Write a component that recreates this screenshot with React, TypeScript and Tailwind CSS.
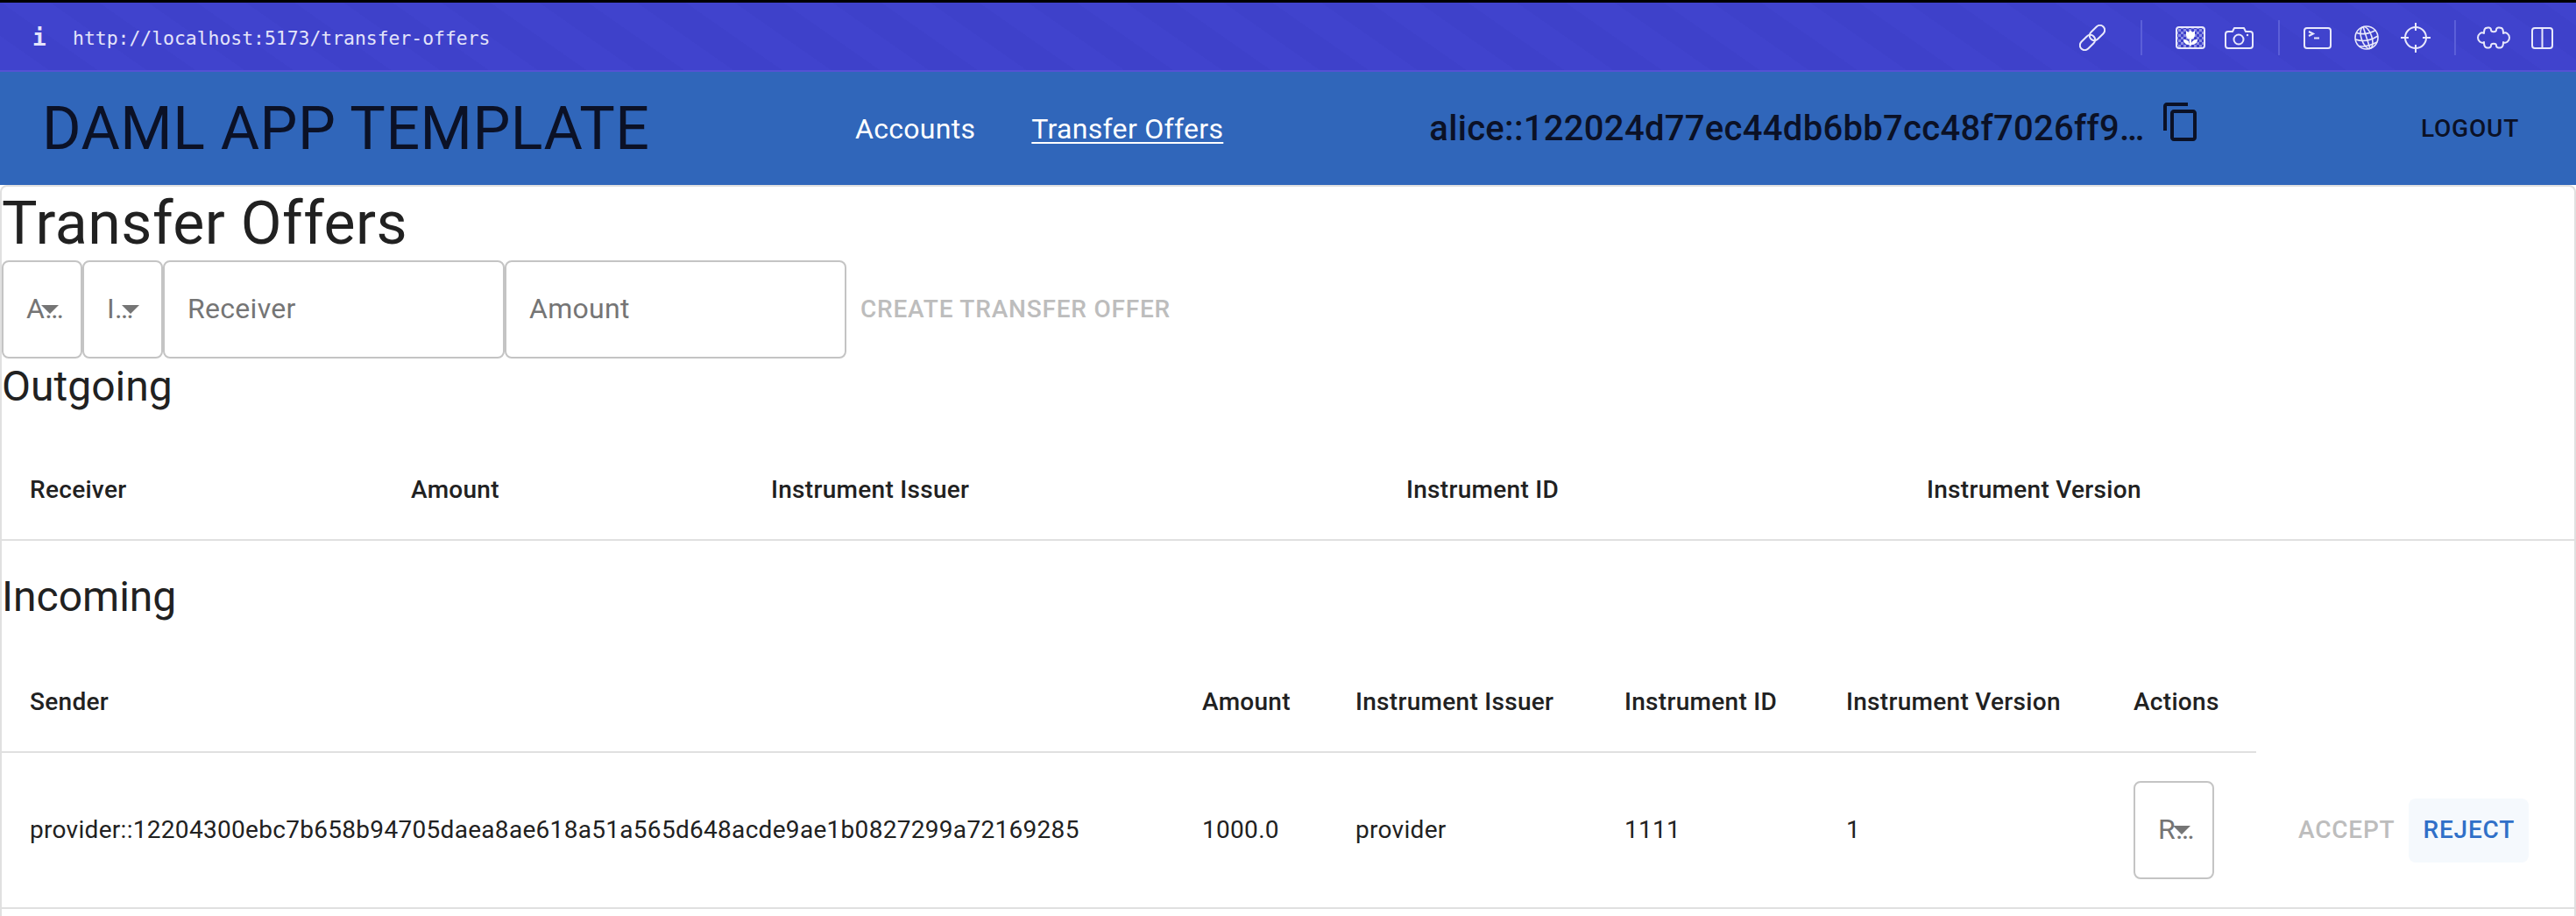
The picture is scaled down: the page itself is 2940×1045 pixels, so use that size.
const roboto = 'font-[Roboto,sans-serif]';

function Separator({ className }: { className: string }) {
  return <div className={`h-10 w-0.5 bg-[#5b5fd8] ${className}`} />;
}

function LinkIcon() {
  return (
    <svg width="30" height="30" viewBox="0 0 30 30" fill="none" stroke="#e8e8fb" strokeWidth="2">
      <rect x="4" y="10.5" width="11" height="20" rx="5.5" transform="rotate(45 9.5 20.5)" />
      <rect x="15" y="-0.5" width="11" height="20" rx="5.5" transform="rotate(45 20.5 9.5)" />
    </svg>
  );
}

function FlowerIcon() {
  return (
    <svg width="34" height="26" viewBox="0 0 34 26" fill="none">
      <defs>
        <pattern id="checker" width="6" height="6" patternUnits="userSpaceOnUse">
          <rect width="3" height="3" fill="#8d8fe4" />
          <rect x="3" y="3" width="3" height="3" fill="#8d8fe4" />
        </pattern>
      </defs>
      <rect x="1" y="1" width="32" height="24" rx="3" fill="url(#checker)" stroke="#e8e8fb" strokeWidth="2" />
      <path d="M12 5l2.5 2L17 4.5 19.5 7 22 5v5a5 5 0 0 1-10 0zM16 15v7h2v-7zM9 15c4 0 7 2 7 6-4 0-7-2-7-6zM25 15c-4 0-7 2-7 6 4 0 7-2 7-6z" fill="#fff" />
    </svg>
  );
}

function CameraIcon() {
  return (
    <svg width="33" height="25" viewBox="0 0 33 25" fill="none" stroke="#e8e8fb" strokeWidth="2" strokeLinejoin="round">
      <path d="M4 5h5l2-4h11l2 4h5a3 3 0 0 1 3 3v13a3 3 0 0 1-3 3H4a3 3 0 0 1-3-3V8a3 3 0 0 1 3-3z" />
      <circle cx="16" cy="14" r="5.5" />
      <circle cx="26" cy="9" r="1.2" fill="#e8e8fb" stroke="none" />
    </svg>
  );
}

function TerminalIcon() {
  return (
    <svg width="32" height="25" viewBox="0 0 32 25" fill="none" stroke="#e8e8fb" strokeWidth="2">
      <rect x="1" y="1" width="30" height="23" rx="3" />
      <path d="M6 5l5 2.5L6 10M12 12.5h6" />
    </svg>
  );
}

function GlobeIcon() {
  return (
    <svg width="28" height="28" viewBox="0 0 28 28" fill="none" stroke="#e8e8fb" strokeWidth="1.6">
      <circle cx="14" cy="14" r="13" />
      <ellipse cx="14" cy="14" rx="6" ry="13" transform="rotate(-18 14 14)" />
      <path d="M10 1.5L18 26.5M2.5 8.5C10 11 18 9 24.5 5.5M1.5 16C10 19 19 17 27 12M5 23.5C11 25 18 23 26 19" />
    </svg>
  );
}

function CrosshairIcon() {
  return (
    <svg width="34" height="34" viewBox="0 0 34 34" fill="none" stroke="#e8e8fb" strokeWidth="2">
      <circle cx="17" cy="17" r="12" />
      <path d="M17 0v9M17 25v9M0 17h9M25 17h9" />
    </svg>
  );
}

function PuzzleIcon() {
  return (
    <svg width="38" height="26" viewBox="0 0 38 26" fill="none" stroke="#e8e8fb" strokeWidth="2" strokeLinejoin="round">
      <path d="M10 2C12 1 16 1 16 4C16 7 22 7 22 4C22 1 26 1 28 2C30 3 30 7 30 8C33 6 37 9 37 13C37 17 33 20 30 18C30 20 30 23 28 24C26 25 22 25 22 22C22 19 16 19 16 22C16 25 12 25 10 24C8 23 8 20 8 18C5 20 1 17 1 13C1 9 5 6 8 8C8 7 8 3 10 2Z" />
    </svg>
  );
}

function ColumnsIcon() {
  return (
    <svg width="25" height="25" viewBox="0 0 25 25" fill="none" stroke="#e8e8fb" strokeWidth="2">
      <rect x="1" y="1" width="23" height="23" rx="3" />
      <path d="M12.5 1v23" />
    </svg>
  );
}

function CopyIcon() {
  return (
    <svg width="48" height="48" viewBox="0 0 24 24" fill="#0b1126">
      <path d="M16 1H4c-1.1 0-2 .9-2 2v14h2V3h12V1zm3 4H8c-1.1 0-2 .9-2 2v14c0 1.1.9 2 2 2h11c1.1 0 2-.9 2-2V7c0-1.1-.9-2-2-2zm0 16H8V7h11v14z" />
    </svg>
  );
}

function BrowserBar() {
  return (
    <div className="h-[82px] shrink-0 border-t-[3px] border-b-2 border-t-black border-b-[#5552d4] bg-[#3f42cc] bg-[repeating-linear-gradient(35deg,#4043cd_0px,#4043cd_32px,#3e41ca_32px,#3e41ca_64px)] flex items-center pt-[3px] text-[#e4e4fa]">
      <span className="ml-[37px] w-[12px] font-['DejaVu_Sans_Mono',monospace] font-bold text-[26px] leading-none">i</span>
      <span className="ml-[34px] mt-[2px] font-['DejaVu_Sans_Mono',monospace] text-[21.4px] leading-none">http://localhost:5173/transfer-offers</span>
      <div className="ml-auto flex items-center">
        <LinkIcon />
        <Separator className="ml-[40px]" />
        <div className="ml-[38px] flex"><FlowerIcon /></div>
        <div className="ml-[22px] flex"><CameraIcon /></div>
        <Separator className="ml-[28px]" />
        <div className="ml-[27px] flex"><TerminalIcon /></div>
        <div className="ml-[26px] flex"><GlobeIcon /></div>
        <div className="ml-[25px] flex"><CrosshairIcon /></div>
        <Separator className="ml-[27px]" />
        <div className="ml-[24px] flex"><PuzzleIcon /></div>
        <div className="ml-[24px] mr-[26px] flex"><ColumnsIcon /></div>
      </div>
    </div>
  );
}

function Header() {
  return (
    <div className="h-[129px] shrink-0 bg-[#3066ba] flex items-center text-[#0b1126]">
      <div className="ml-[48px] w-[928px] shrink-0 text-[68px] leading-none tracking-[0.5px]">DAML APP TEMPLATE</div>
      <a className="text-[32px] leading-none tracking-[0.3px] text-white">Accounts</a>
      <a className="ml-[64px] text-[32px] leading-none tracking-[0.3px] text-white underline underline-offset-4 decoration-2">Transfer Offers</a>
      <div className="ml-[235px] w-[818px] truncate text-[40px] font-medium leading-none tracking-[0.3px]">alice::122024d77ec44db6bb7cc48f7026ff9a1b2c3d4e5f</div>
      <div className="ml-[16px] -mt-[15px]"><CopyIcon /></div>
      <div className="ml-auto mr-[65px] text-[28px] font-medium leading-none tracking-[0.8px]">LOGOUT</div>
    </div>
  );
}

function NativeSelect({ label }: { label: string }) {
  return (
    <div className="relative h-28 w-[92px] shrink-0 rounded-lg border-2 border-[#c4c4c4] flex items-center pl-[26px] pr-[20px] pb-[2px] text-[32px] tracking-[0.3px] text-[#757575]">
      <span className="truncate">{label}</span>
      <div className="absolute right-[25px] top-[49px] h-0 w-0 border-x-[10px] border-t-[10px] border-x-transparent border-t-[#757575]" />
    </div>
  );
}

function TextInput({ placeholder }: { placeholder: string }) {
  return (
    <div className="h-28 w-[390px] shrink-0 rounded-lg border-2 border-[#c4c4c4] flex items-center pl-[26px] pb-[2px] text-[32px] tracking-[0.3px] text-[#757575]">
      {placeholder}
    </div>
  );
}

const outgoingCols = 'grid grid-cols-[435px_411px_725px_594px_1fr]';
const incomingCols = 'grid grid-cols-[1338px_175px_307px_253px_328px_1fr]';

function HeadCell({ children }: { children: string }) {
  return <div className="p-8 text-[28px] font-medium leading-[48px] tracking-[0.3px] text-[#212121]">{children}</div>;
}

export default function App() {
  return (
    <div className={`${roboto} h-[1045px] overflow-hidden bg-white flex flex-col`}>
      <BrowserBar />
      <Header />
      <div className="flex-1 rounded-t-lg border-x-2 border-t-2 border-[#e0e0e0]">
        <h1 className="text-[68px] leading-[84px] tracking-[0.5px] text-[#212121]">Transfer Offers</h1>

        <div className="flex items-center">
          <NativeSelect label="Account" />
          <NativeSelect label="Instrument" />
          <TextInput placeholder="Receiver" />
          <TextInput placeholder="Amount" />
          <div className="ml-[16px] text-[28px] font-medium tracking-[0.8px] text-[#bdbdbd]">CREATE TRANSFER OFFER</div>
        </div>

        <h2 className="text-[48px] leading-[64px] text-[#212121]">Outgoing</h2>

        {/* 发出的 */}
        <div className={`${outgoingCols} mt-[30px] border-b-2 border-[#e0e0e0]`}>
          <HeadCell>Receiver</HeadCell>
          <HeadCell>Amount</HeadCell>
          <HeadCell>Instrument Issuer</HeadCell>
          <HeadCell>Instrument ID</HeadCell>
          <HeadCell>Instrument Version</HeadCell>
        </div>

        <h2 className="mt-8 text-[48px] leading-[64px] text-[#212121]">Incoming</h2>

        {/* 收到的 */}
        <div className={`${incomingCols} mt-8 w-[2573px] border-b-2 border-[#e0e0e0]`}>
          <HeadCell>Sender</HeadCell>
          <HeadCell>Amount</HeadCell>
          <HeadCell>Instrument Issuer</HeadCell>
          <HeadCell>Instrument ID</HeadCell>
          <HeadCell>Instrument Version</HeadCell>
          <HeadCell>Actions</HeadCell>
        </div>
        <div className={`${incomingCols} items-center border-b-2 border-[#e0e0e0] text-[28px] tracking-[0.3px] text-[#212121]`}>
          <div className="px-8">provider::12204300ebc7b658b94705daea8ae618a51a565d648acde9ae1b0827299a72169285</div>
          <div className="px-8">1000.0</div>
          <div className="px-8">provider</div>
          <div className="px-8">1111</div>
          <div className="px-8">1</div>
          <div className="flex items-center py-8 pl-8">
            <NativeSelect label="Reason" />
            <div className="ml-[96px] text-[28px] font-medium tracking-[0.8px] text-[#bdbdbd]">ACCEPT</div>
            <div className="ml-[16px] flex h-[73px] items-center rounded-lg bg-[#f5f9fd] px-4 text-[28px] font-medium tracking-[0.8px] text-[#3070c8]">REJECT</div>
          </div>
        </div>
      </div>
    </div>
  );
}
